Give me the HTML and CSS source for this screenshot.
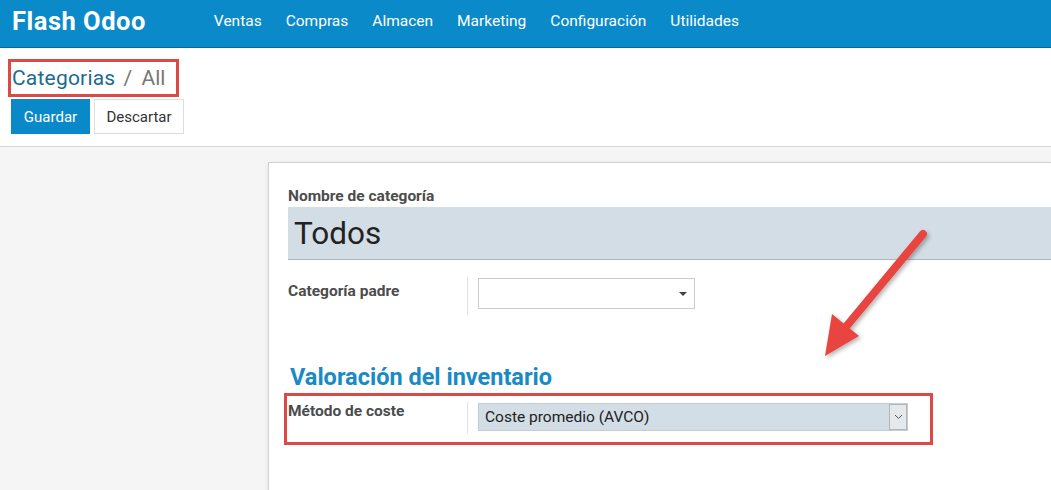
FILE: index.html
```html
<!DOCTYPE html>
<html lang="es">
<head>
  <meta charset="UTF-8">
  <title>Categorias / All - Flash Odoo</title>
  <link rel="stylesheet" href="styles.css">
</head>
<body>
  <header class="navbar">
    <a class="brand">Flash Odoo</a>
    <ul class="menu">
      <li>Ventas</li>
      <li>Compras</li>
      <li>Almacen</li>
      <li>Marketing</li>
      <li>Configuración</li>
      <li>Utilidades</li>
    </ul>
  </header>

  <div class="control_panel">
    <div class="breadcrumb mark">
      <a class="crumb_link">Categorias</a>
      <span class="crumb_sep">/</span>
      <span class="crumb_active">All</span>
    </div>
    <div class="buttons">
      <button class="btn btn_primary">Guardar</button>
      <button class="btn btn_default">Descartar</button>
    </div>
  </div>

  <main class="content">
    <div class="sheet">
      <label class="field_label">Nombre de categoría</label>
      <div class="name_input">Todos</div>

      <div class="field_row">
        <label class="field_label">Categoría padre</label>
        <div class="field_value">
          <div class="m2o">
            <span class="caret"></span>
          </div>
        </div>
      </div>

      <h2 class="group_title">Valoración del inventario</h2>

      <div class="field_row mark method_row">
        <label class="field_label">Método de coste</label>
        <div class="field_value">
          <div class="select">
            <span class="select_text">Coste promedio (AVCO)</span>
            <span class="select_btn">
              <svg width="9" height="6" viewBox="0 0 9 6"><path d="M1 1 L4.5 4.5 L8 1" fill="none" stroke="#555" stroke-width="1"/></svg>
            </span>
          </div>
        </div>
      </div>
    </div>
  </main>

  <svg class="arrow" width="140" height="150" viewBox="0 0 140 150">
    <defs>
      <filter id="shadow" x="-20%" y="-20%" width="140%" height="140%">
        <feDropShadow dx="2" dy="2" stdDeviation="2" flood-color="#000" flood-opacity="0.3"/>
      </filter>
    </defs>
    <g filter="url(#shadow)">
      <line x1="118" y1="16" x2="40" y2="110" stroke="#e8443f" stroke-width="8" stroke-linecap="round"/>
      <polygon points="20,138 27,96 54,118" fill="#e8443f"/>
    </g>
  </svg>
</body>
</html>
```

FILE: styles.css
```css
*,*:before,*:after{
  box-sizing: border-box;
}
html,body{
  margin: 0;
  padding: 0;
  height: 100%;
}
body{
  font-family: Roboto, "Liberation Sans", sans-serif;
  font-size: 14px;
  color: #333;
  background: #f5f5f5;
  overflow: hidden;
  position: relative;
}
ul{
  margin: 0;
  padding: 0;
  list-style: none;
}

/* top bar */
.navbar{
  display: flex;
  align-items: center;
  height: 48px;
  background: #0a8ac9;
  border-bottom: 1px solid #07689a;
  color: #fff;
}
.brand{
  padding-left: 12px;
  font-size: 25.5px;
  font-weight: bold;
  letter-spacing: 0.5px;
  margin-top: -5px;
}
.menu{
  display: flex;
  margin-left: 56px;
  margin-top: -6px;
  font-size: 15.5px;
}
.menu li{
  padding: 0 12px;
}

/* control panel */
.control_panel{
  background: #fff;
  border-bottom: 1px solid #d9d9d9;
  padding: 11px 0 12px 11px;
}
.mark{
  border: 3px solid #dc4a47;
}
.breadcrumb{
  display: inline-block;
  margin-left: -3px;
  padding: 1px 11px 1px 1px;
  font-size: 21px;
  line-height: 30px;
}
.crumb_link{
  color: #1b6b92;
  letter-spacing: 0.2px;
}
.crumb_sep{
  color: #777;
  margin: 0 4px 0 3px;
}
.crumb_active{
  color: #777;
}
.buttons{
  display: flex;
  gap: 4px;
  margin-top: 2px;
}
.btn{
  height: 35px;
  padding: 0 11px;
  font-family: inherit;
  font-size: 15px;
  border: 1px solid transparent;
  border-radius: 0;
}
.btn_primary{
  background: #0a89c8;
  color: #fff;
  width: 79px;
}
.btn_default{
  background: #fff;
  color: #333;
  border-color: #ddd;
  width: 90px;
}

/* form */
.content{
  padding: 15px 0 0 268px;
}
.sheet{
  background: #fff;
  border: 1px solid #d0d0d0;
  border-right: none;
  box-shadow: 0 2px 6px rgba(0,0,0,0.08);
  padding: 24px 0 60px 19px;
  min-height: 340px;
}
.field_label{
  display: block;
  font-weight: bold;
  font-size: 15.5px;
  color: #4c4c4c;
}
.name_input{
  margin-top: 2px;
  height: 53px;
  background: #d2dde5;
  border-bottom: 1px solid #a9b7c2;
  font-size: 31.5px;
  line-height: 54px;
  padding-left: 6px;
  color: #222;
}
.field_row{
  display: flex;
  align-items: flex-start;
  margin-top: 17px;
}
.field_row .field_label{
  width: 179px;
  padding-top: 5px;
}
.field_value{
  border-left: 1px solid #e2e2e2;
  padding: 1px 0 6px 10px;
}
.m2o{
  position: relative;
  width: 217px;
  height: 31px;
  border: 1px solid #ccc;
}
.caret{
  position: absolute;
  right: 7px;
  top: 13px;
  border-left: 4px solid transparent;
  border-right: 4px solid transparent;
  border-top: 4px solid #444;
}
.group_title{
  margin: 48px 0 0 2px;
  font-size: 23.5px;
  font-weight: bold;
  color: #1a8ac6;
}
.method_row{
  margin: 2px 0 0 -4px;
  width: 649px;
  padding: 6px 0 8px 1px;
}
.method_row .field_label{
  width: 179px;
  padding-top: 0;
}
.method_row .field_value{
  padding: 1px 0 3px 10px;
}
.select{
  display: flex;
  align-items: center;
  width: 430px;
  height: 28px;
  background: #d2dde5;
  border: 1px solid #c2ccd4;
}
.select_text{
  flex: 1;
  padding-left: 6px;
  font-size: 15.5px;
  color: #222;
}
.select_btn{
  display: flex;
  align-items: center;
  justify-content: center;
  width: 18px;
  height: 26px;
  background: #e6e9ec;
  border: 1px solid #b5b5b5;
}

/* annotation arrow */
.arrow{
  position: absolute;
  left: 805px;
  top: 218px;
}
```
